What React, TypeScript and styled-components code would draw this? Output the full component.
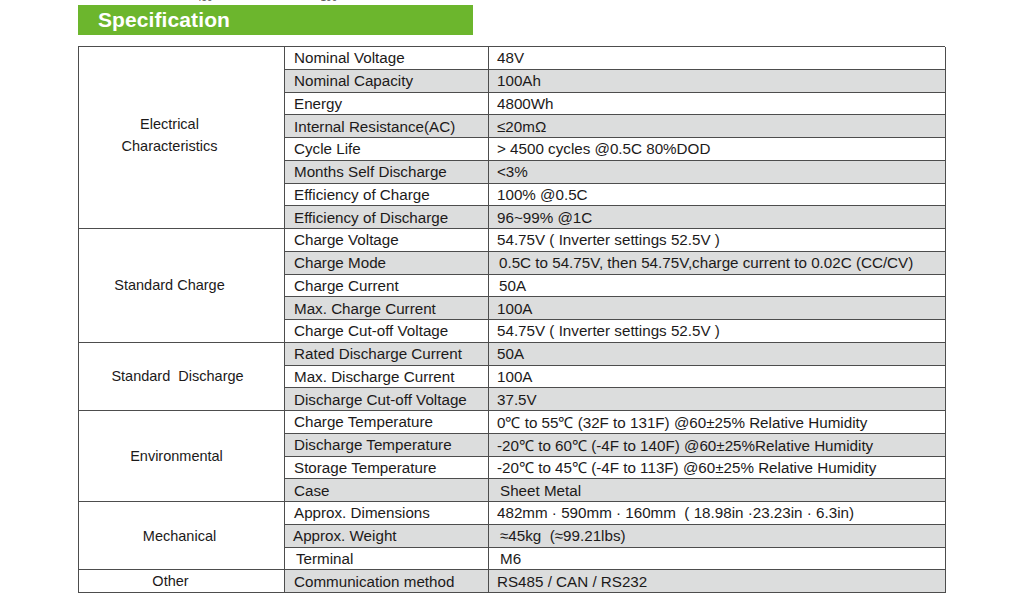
import React from "react";
import styled, { createGlobalStyle } from "styled-components";

const Global = createGlobalStyle`
  html, body { margin: 0; padding: 0; background: #ffffff; }
  body { font-family: "Liberation Sans", Arial, sans-serif; color: #1c1a1a; }
`;

const Page = styled.div`
  width: 1024px;
  height: 610px;
  overflow: hidden;
  display: flex;
  flex-direction: column;
`;

const ClipStrip = styled.div`
  height: 4px;
  overflow: hidden;
  display: flex;
  align-items: flex-end;
  padding-left: 196px;
  font-size: 10px;
  line-height: 10px;
  color: #555;
`;

const ClipText = styled.span<{ $ml?: number }>`
  margin-left: ${(p) => p.$ml ?? 0}px;
  transform: translateY(-1px);
`;

const Banner = styled.div`
  margin: 1px 0 0 78px;
  width: 395px;
  height: 30px;
  background: #6cb62d;
  display: flex;
  align-items: center;
  padding-left: 20px;
  box-sizing: border-box;
  color: #ffffff;
  font-weight: bold;
  font-size: 21px;
  letter-spacing: 0.1px;
`;

const Table = styled.div`
  margin: 11px 0 0 78px;
  display: grid;
  grid-template-columns: 206px 204px 457px;
  grid-auto-rows: 22.75px;
  border-top: 1.5px solid #4d4d4d;
  border-left: 1.5px solid #4d4d4d;
  width: 867px;
  box-sizing: border-box;
`;

const GroupCell = styled.div<{ $span: number; $shift: number; $lift: number }>`
  grid-column: 1;
  grid-row: span ${(p) => p.$span};
  border-right: 1.5px solid #4d4d4d;
  border-bottom: 1.5px solid #4d4d4d;
  background: #ffffff;
  display: flex;
  flex-direction: column;
  align-items: center;
  justify-content: center;
  padding-right: ${(p) => p.$shift}px;
  padding-bottom: ${(p) => p.$lift}px;
  font-size: 14.5px;
  line-height: 22px;
  white-space: pre;
`;

const LabelCell = styled.div<{ $shade: boolean; $indent: number }>`
  grid-column: 2;
  border-right: 1.5px solid #4d4d4d;
  border-bottom: 1.5px solid #4d4d4d;
  background: ${(p) => (p.$shade ? "#dcdddd" : "#ffffff")};
  display: flex;
  align-items: center;
  padding-left: ${(p) => p.$indent}px;
  font-size: 15.2px;
  white-space: nowrap;
  overflow: hidden;
`;

const ValueCell = styled.div<{ $shade: boolean; $indent: number }>`
  grid-column: 3;
  border-right: 1.5px solid #4d4d4d;
  border-bottom: 1.5px solid #4d4d4d;
  background: ${(p) => (p.$shade ? "#dcdddd" : "#ffffff")};
  display: flex;
  align-items: center;
  padding-left: ${(p) => p.$indent}px;
  font-size: 15.2px;
  white-space: pre;
  overflow: hidden;
`;

type Row = { label: string; value: string; li?: number; vi?: number };
type Group = { title: string[]; shift: number; lift?: number; rows: Row[] };

const groups: Group[] = [
  {
    title: ["Electrical", "Characteristics"],
    shift: 24,
    lift: 6,
    rows: [
      { label: "Nominal Voltage", value: "48V" },
      { label: "Nominal Capacity", value: "100Ah" },
      { label: "Energy", value: "4800Wh" },
      { label: "Internal Resistance(AC)", value: "≤20mΩ" },
      { label: "Cycle Life", value: "> 4500 cycles @0.5C 80%DOD" },
      { label: "Months Self Discharge", value: "<3%" },
      { label: "Efficiency of Charge", value: "100% @0.5C" },
      { label: "Efficiency of Discharge", value: "96~99% @1C" },
    ],
  },
  {
    title: ["Standard Charge"],
    shift: 24,
    lift: 1,
    rows: [
      { label: "Charge Voltage", value: "54.75V ( Inverter settings 52.5V )" },
      { label: "Charge Mode", value: "0.5C to 54.75V, then 54.75V,charge current to 0.02C (CC/CV)", vi: 10 },
      { label: "Charge Current", value: "50A", vi: 10 },
      { label: "Max. Charge Current", value: "100A" },
      { label: "Charge Cut-off Voltage", value: "54.75V ( Inverter settings 52.5V )" },
    ],
  },
  {
    title: ["Standard  Discharge"],
    shift: 8,
    rows: [
      { label: "Rated Discharge Current", value: "50A" },
      { label: "Max. Discharge Current", value: "100A" },
      { label: "Discharge Cut-off Voltage", value: "37.5V" },
    ],
  },
  {
    title: ["Environmental"],
    shift: 10,
    rows: [
      { label: "Charge Temperature", value: "0℃ to 55℃ (32F to 131F) @60±25% Relative Humidity" },
      { label: "Discharge Temperature", value: "-20℃ to 60℃ (-4F to 140F) @60±25%Relative Humidity" },
      { label: "Storage Temperature", value: "-20℃ to 45℃ (-4F to 113F) @60±25% Relative Humidity" },
      { label: "Case", value: "Sheet Metal", vi: 11 },
    ],
  },
  {
    title: ["Mechanical"],
    shift: 4,
    rows: [
      { label: "Approx. Dimensions", value: "482mm · 590mm · 160mm  ( 18.98in ·23.23in · 6.3in)" },
      { label: "Approx. Weight", value: "≈45kg  (≈99.21lbs)", li: 8, vi: 11 },
      { label: "Terminal", value: "M6", li: 11, vi: 11 },
    ],
  },
  {
    title: ["Other"],
    shift: 22,
    rows: [{ label: "Communication method", value: "RS485 / CAN / RS232" }],
  },
];

export default function App() {
  let idx = 0;
  return (
    <Page>
      <Global />
      <ClipStrip>
        <ClipText>450</ClipText>
        <ClipText $ml={44}>'</ClipText>
        <ClipText $ml={52}>'</ClipText>
        <ClipText $ml={8}>100</ClipText>
        <ClipText $ml={8}>'</ClipText>
      </ClipStrip>
      <Banner>Specification</Banner>
      <Table>
        {groups.map((g) => (
          <React.Fragment key={g.title.join(" ")}>
            <GroupCell $span={g.rows.length} $shift={g.shift} $lift={g.lift ?? 0}>
              {g.title.map((t) => (
                <span key={t}>{t}</span>
              ))}
            </GroupCell>
            {g.rows.map((r) => {
              const shade = idx % 2 === 1;
              idx += 1;
              return (
                <React.Fragment key={r.label}>
                  <LabelCell $shade={shade} $indent={r.li ?? 9}>
                    {r.label}
                  </LabelCell>
                  <ValueCell $shade={shade} $indent={r.vi ?? 8}>
                    {r.value}
                  </ValueCell>
                </React.Fragment>
              );
            })}
          </React.Fragment>
        ))}
      </Table>
    </Page>
  );
}
